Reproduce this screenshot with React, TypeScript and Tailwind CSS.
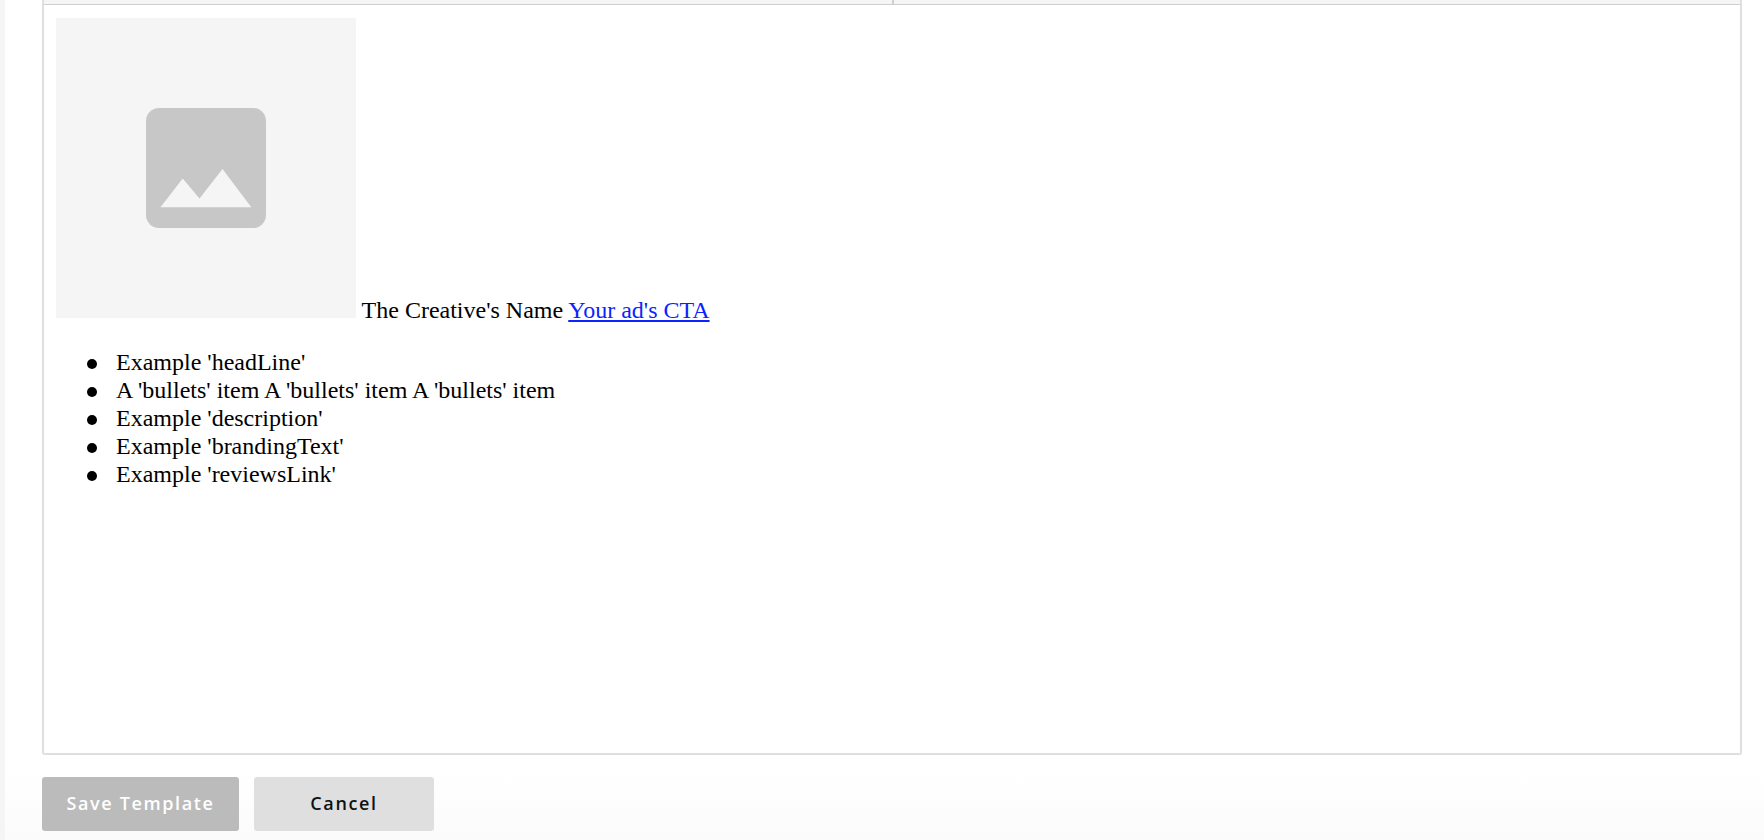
const items = [
  "Example 'headLine'",
  "A 'bullets' item A 'bullets' item A 'bullets' item",
  "Example 'description'",
  "Example 'brandingText'",
  "Example 'reviewsLink'",
];

function PlaceholderImage() {
  return (
    <svg
      className="inline-block size-[300px] bg-[#f5f5f5] align-baseline"
      viewBox="0 0 300 300"
      role="img"
      aria-label="Creative image"
    >
      <rect x="90" y="90" width="120" height="120" rx="13" fill="#c7c7c7" />
      <path d="M104.500 189.200 L126.700 160.500 L143.500 180.500 L166.500 151 L195.300 189.200 Z" fill="#f5f5f5" />
    </svg>
  );
}

export default function App() {
  return (
    <div className="flex min-h-screen bg-white">
      <div className="w-[5px] shrink-0 bg-[#f5f5f5]" />
      <main className="flex grow flex-col bg-linear-to-t from-[#fbfbfb] to-white to-8% pr-[22px] pl-[37px]">
        <section className="flex min-h-[755px] flex-col rounded-b-[3px] border-x-2 border-b-2 border-[#dfdfdf] bg-white">
          <div className="flex h-[5px] border-b border-[#cfcfcf] bg-[#f5f5f5]">
            <div className="w-1/2" />
            <div className="w-1/2 border-l-2 border-[#cfcfcf]" />
          </div>
          <div className="px-3 pt-[13px] font-['Liberation_Serif',serif] text-[24px] leading-[28px] text-black">
            <div>
              <PlaceholderImage /> The Creative's Name{" "}
              <a href="#cta" className="text-[#0b24fb] underline">
                Your ad's CTA
              </a>
            </div>
            <ul className="mt-6 pl-[31px]">
              {items.map((item) => (
                <li key={item} className="flex items-center gap-[19px]">
                  <span className="mt-1 size-[10px] rounded-full bg-black" />
                  {item}
                </li>
              ))}
            </ul>
          </div>
        </section>
        <div className="flex gap-[15px] pt-[22px] font-['Open_Sans',sans-serif] text-[18px] font-semibold tracking-[0.09em]">
          <button
            type="button"
            className="h-[54px] w-[197px] rounded-[3px] bg-[#bbbbbb] pb-[2px] text-white"
          >
            Save Template
          </button>
          <button
            type="button"
            className="h-[54px] w-[180px] rounded-[3px] bg-[#dfdfdf] pb-[2px] text-[#111111]"
          >
            Cancel
          </button>
        </div>
      </main>
    </div>
  );
}
